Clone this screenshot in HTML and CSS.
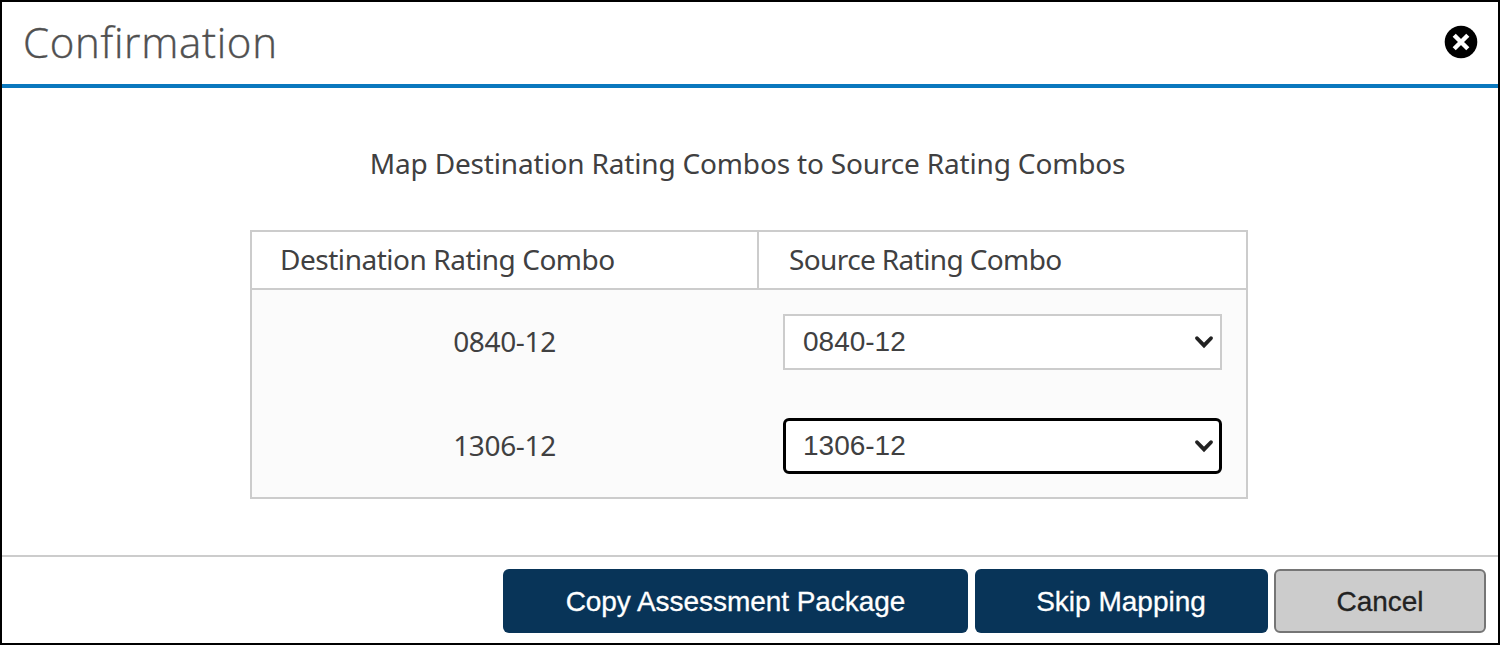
FILE: index.html
```
<!DOCTYPE html>
<html lang="en">
<head>
<meta charset="utf-8">
<title>Confirmation</title>
<link rel="stylesheet" href="styles.css">
</head>
<body>
<div class="dialog" role="dialog" aria-labelledby="dialog-title">
  <header class="dialog-header">
    <h1 class="dialog-title" id="dialog-title">Confirmation</h1>
    <button class="close" aria-label="Close">
      <svg viewBox="0 0 34 34" width="34" height="34"><circle cx="17" cy="17" r="16.3" fill="#000"/><path d="M10.2 10.2l13.6 13.6M23.8 10.2l-13.6 13.6" stroke="#fff" stroke-width="4.4"/></svg>
    </button>
  </header>
  <main class="dialog-body">
    <h2 class="heading">Map Destination Rating Combos to Source Rating Combos</h2>
    <div class="grid">
      <div class="th"><span class="th-dest">Destination Rating Combo</span></div>
      <div class="th th-last"><span class="th-src">Source Rating Combo</span></div>
      <div class="row">
        <span class="combo">0840-12</span>
        <div class="select"><span class="value">0840-12</span><svg class="chevron" viewBox="0 0 20 14" width="20" height="14"><path d="M3 3.2l7 7.2 7-7.2"/></svg></div>
      </div>
      <div class="row">
        <span class="combo">1306-12</span>
        <div class="select focused"><span class="value">1306-12</span><svg class="chevron" viewBox="0 0 20 14" width="20" height="14"><path d="M3 3.2l7 7.2 7-7.2"/></svg></div>
      </div>
    </div>
  </main>
  <footer class="dialog-footer">
    <button class="btn btn-copy"><span>Copy Assessment Package</span></button>
    <button class="btn btn-skip"><span>Skip Mapping</span></button>
    <button class="btn btn-cancel"><span>Cancel</span></button>
  </footer>
</div>
</body>
</html>
```
FILE: styles.css
```
* { box-sizing: border-box; }
body { margin: 0; background: #fff; color: #404041; font-family: "Noto Sans", sans-serif; }
.dialog { display: flex; flex-direction: column; width: 1500px; height: 645px; border: 2px solid #000; }
.dialog-header { display: flex; align-items: center; justify-content: space-between; height: 86px; padding: 0 20px 2px 21px; border-bottom: 4px solid #0a78be; }
.dialog-title { margin: 0; font: 300 42px/60px "Open Sans", sans-serif; letter-spacing: 0.7px; color: #505050; font-variant-ligatures: none; -webkit-text-stroke: 0.4px #505050; }
.close { display: flex; padding: 0; border: 0; background: none; }
.dialog-body { flex: 1; display: flex; flex-direction: column; padding: 55px 250px 0 248px; }
.heading { margin: 0 0 47px; padding-right: 3px; font: 400 28px/40px "Noto Sans", sans-serif; letter-spacing: -0.17px; text-align: center; white-space: nowrap; }
.grid { display: grid; grid-template-columns: 507px 1fr; grid-template-rows: 58px 104px 104px; height: 269px; border: 2px solid #ccc; background: #fbfbfb; font-size: 28px; }
.th { display: flex; align-items: center; padding: 0 0 2px 28px; background: #fff; border-bottom: 2px solid #ccc; border-right: 2px solid #ccc; }
.th-last { padding-left: 30px; border-right: 0; }
.th-dest { letter-spacing: -0.47px; }
.th-src { letter-spacing: -0.62px; }
.row { grid-column: 1 / -1; display: grid; grid-template-columns: 507px 1fr; align-items: center; padding-right: 24px; }
.combo { padding: 0 2px 2px 0; letter-spacing: -0.35px; text-align: center; }
.select { display: flex; align-items: center; justify-content: space-between; height: 56px; margin-left: 24px; padding: 0 6px 0 18px; border: 2px solid #ccc; background: #fff; font-family: "Liberation Sans", sans-serif; }
.focused { border: 3px solid #000; border-radius: 6px; padding: 0 5px 0 17px; }
.chevron path { fill: none; stroke: #222; stroke-width: 3.8; stroke-linecap: round; }
.dialog-footer { display: flex; justify-content: flex-end; height: 88px; padding: 12px 12px 0 0; border-top: 2px solid #ccc; }
.btn { height: 64px; border: 0; border-radius: 6px; background: #083458; color: #fff; font: 28px "Liberation Sans", sans-serif; padding: 1px 0 0; -webkit-text-stroke: 0.3px currentColor; }
.btn-copy { width: 465px; margin-right: 7px; letter-spacing: -0.05px; }
.btn-skip { width: 293px; margin-right: 6px; padding-right: 1px; }
.btn-cancel { width: 212px; border: 2px solid #757575; background: #ccc; color: #222; }
```
